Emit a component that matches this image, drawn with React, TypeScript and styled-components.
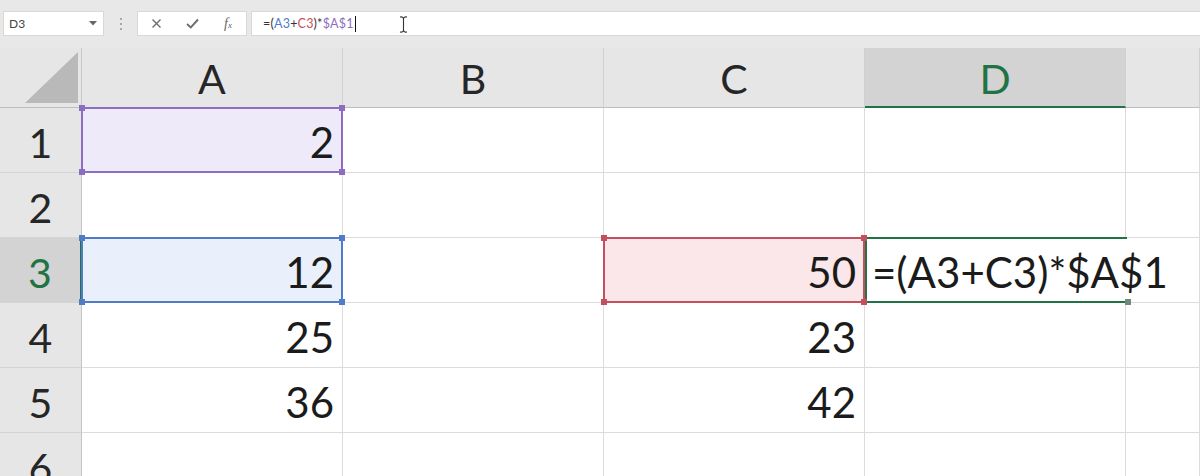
import React from 'react';
import styled, { createGlobalStyle } from 'styled-components';

const GREEN = '#217346';

const GlobalStyle = createGlobalStyle`
  html, body { margin: 0; padding: 0; background: #fff; overflow: hidden; }
  body { font-family: Lato, "Open Sans", sans-serif; }
  * { box-sizing: border-box; }
`;

const Page = styled.div`
  width: 1200px;
  height: 476px;
  overflow: hidden;
  display: flex;
  flex-direction: column;
  background: #fff;
`;

const Toolbar = styled.div`
  height: 48px;
  flex: none;
  background: #e8e8e8;
  display: flex;
  align-items: flex-start;
  padding: 11px 0 0 3px;
`;

const NameBox = styled.div`
  width: 101px;
  height: 25px;
  background: #fff;
  border: 1px solid #d8d8d8;
  display: flex;
  align-items: center;
  justify-content: space-between;
  padding: 0 6px 0 5px;
  font-family: Lato, sans-serif;
  font-size: 12px;
  color: #444;
`;

const Grip = styled.div`
  width: 33px;
  height: 25px;
  display: flex;
  flex-direction: column;
  align-items: center;
  justify-content: center;
  gap: 3px;
`;

const GripDot = styled.span`
  width: 2px;
  height: 2px;
  background: #a8a8a8;
`;

const FuncBox = styled.div`
  width: 110px;
  height: 25px;
  background: #fff;
  border: 1px solid #d8d8d8;
  display: grid;
  grid-template-columns: repeat(3, 36px);
  align-items: center;
  justify-items: center;
`;

const FxLabel = styled.span`
  font-family: "Liberation Serif", serif;
  font-style: italic;
  font-size: 14px;
  color: #666;
  line-height: 1;
`;

const FxSub = styled.span`
  font-size: 9px;
  font-style: italic;
`;

const FormulaBox = styled.div`
  position: relative;
  flex: 1;
  margin-left: 4px;
  height: 25px;
  background: #fff;
  border: 1px solid #d8d8d8;
  border-right: none;
  display: flex;
  align-items: center;
  padding-left: 11px;
  font-family: Lato, sans-serif;
  font-size: 12.5px;
  letter-spacing: 0.2px;
`;

const Token = styled.span<{ $color?: string }>`
  color: ${(p) => p.$color || '#333'};
`;

const Caret = styled.span`
  width: 1px;
  height: 16px;
  background: #111;
  margin-left: 1px;
`;

const IBeam = styled.svg`
  position: absolute;
  left: 147px;
  top: 4px;
`;

const Sheet = styled.div`
  flex: 1;
  display: grid;
  grid-template-columns: 82px repeat(4, 261px) 1fr;
  grid-template-rows: 60px repeat(6, 65px);
  overflow: hidden;
`;

const Corner = styled.div`
  background: #e6e6e6;
  border-right: 1px solid #c8c8c8;
  border-bottom: 1px solid #bdbdbd;
  display: flex;
  align-items: flex-end;
  justify-content: flex-end;
  padding: 0 3px 4px 0;
`;

const ColHeader = styled.div<{ $active?: boolean }>`
  background: ${(p) => (p.$active ? '#d3d3d3' : '#e6e6e6')};
  border-right: 1px solid #d0d0d0;
  border-bottom: ${(p) => (p.$active ? `2px solid ${GREEN}` : '1px solid #bdbdbd')};
  display: flex;
  align-items: center;
  justify-content: center;
  padding-top: 2px;
  font-size: 41px;
  color: ${(p) => (p.$active ? GREEN : '#262626')};
`;

const RowHeader = styled.div<{ $active?: boolean }>`
  background: ${(p) => (p.$active ? '#d3d3d3' : '#e6e6e6')};
  border-right: ${(p) => (p.$active ? `2px solid ${GREEN}` : '1px solid #c4c4c4')};
  border-bottom: 1px solid #d4d4d4;
  display: flex;
  align-items: center;
  justify-content: center;
  padding-top: 4px;
  font-size: 41px;
  color: ${(p) => (p.$active ? GREEN : '#262626')};
`;

const Cell = styled.div<{ $fill?: string; $editing?: boolean }>`
  position: relative;
  z-index: ${(p) => (p.$editing ? 2 : 'auto')};
  background: ${(p) => p.$fill || '#fff'};
  border-right: 1px solid ${(p) => (p.$editing ? 'transparent' : '#dcdcdc')};
  border-bottom: 1px solid #dcdcdc;
  display: flex;
  align-items: center;
  justify-content: ${(p) => (p.$editing ? 'flex-start' : 'flex-end')};
  padding: ${(p) => (p.$editing ? '4px 0 0 7px' : '4px 8px 0 8px')};
  font-size: 42px;
  color: #1b1b1b;
  white-space: nowrap;
  min-width: 0;
`;

const RangeOutline = styled.div<{ $color: string }>`
  position: absolute;
  inset: -1px;
  border: 2px solid ${(p) => p.$color};
  pointer-events: none;
  z-index: 3;
`;

const EditOutline = styled.div`
  position: absolute;
  top: -1px;
  bottom: -1px;
  left: 0;
  right: -2px;
  border: 2px solid ${GREEN};
  border-right: none;
  pointer-events: none;
  z-index: 3;
`;

const Handle = styled.span<{ $color: string; $v: 'top' | 'bottom'; $h: 'left' | 'right' }>`
  position: absolute;
  width: 6px;
  height: 6px;
  background: ${(p) => p.$color};
  ${(p) => p.$v}: -4px;
  ${(p) => p.$h}: -4px;
`;

const ranges: Record<string, { border: string; fill: string }> = {
  purple: { border: '#8c6dc2', fill: '#eeeafa' },
  blue: { border: '#4f7bc8', fill: '#e9effb' },
  red: { border: '#c4505f', fill: '#fbe7e9' },
};

type CellData = { value?: string; range?: string; editing?: boolean };

const rows: Record<number, Record<string, CellData>> = {
  1: { A: { value: '2', range: 'purple' } },
  2: {},
  3: { A: { value: '12', range: 'blue' }, C: { value: '50', range: 'red' }, D: { editing: true } },
  4: { A: { value: '25' }, C: { value: '23' } },
  5: { A: { value: '36' }, C: { value: '42' } },
  6: {},
};

const cols = ['A', 'B', 'C', 'D', 'E'];

const Corners = ({ color }: { color: string }) => (
  <>
    <Handle $color={color} $v="top" $h="left" />
    <Handle $color={color} $v="top" $h="right" />
    <Handle $color={color} $v="bottom" $h="left" />
    <Handle $color={color} $v="bottom" $h="right" />
  </>
);

const FormulaTokens = ({ big }: { big?: boolean }) => {
  const dark = big ? '#1b1b1b' : '#333';
  return (
    <>
      <Token $color={dark}>=(</Token>
      <Token $color={big ? dark : '#4f7bc8'}>A3</Token>
      <Token $color={dark}>+</Token>
      <Token $color={big ? dark : '#c4505f'}>C3</Token>
      <Token $color={dark}>)*</Token>
      <Token $color={big ? dark : '#8c6dc2'}>$A$1</Token>
    </>
  );
};

export default function App() {
  return (
    <Page>
      <GlobalStyle />
      <Toolbar>
        <NameBox>
          <span>D3</span>
          <svg width="8" height="5" viewBox="0 0 8 5">
            <path d="M0 0 L8 0 L4 4.5 Z" fill="#666" />
          </svg>
        </NameBox>
        <Grip>
          <GripDot />
          <GripDot />
          <GripDot />
        </Grip>
        <FuncBox>
          <svg width="11" height="11" viewBox="0 0 11 11">
            <path d="M1.5 1.5 L9.5 9.5 M9.5 1.5 L1.5 9.5" stroke="#6e6e6e" strokeWidth="1.4" />
          </svg>
          <svg width="13" height="11" viewBox="0 0 13 11">
            <path d="M1 6 L4.8 9.5 L12 1.5" stroke="#6e6e6e" strokeWidth="1.9" fill="none" />
          </svg>
          <FxLabel>
            f<FxSub>x</FxSub>
          </FxLabel>
        </FuncBox>
        <FormulaBox>
          <FormulaTokens />
          <Caret />
          <IBeam width="9" height="17" viewBox="0 0 9 17">
            <path
              d="M1 1 Q4.5 0.5 4.5 3 Q4.5 0.5 8 1 M4.5 3 V14 M1 16 Q4.5 16.5 4.5 14 Q4.5 16.5 8 16"
              stroke="#333"
              strokeWidth="1.1"
              fill="none"
            />
          </IBeam>
        </FormulaBox>
      </Toolbar>
      <Sheet>
        <Corner>
          <svg width="53" height="51" viewBox="0 0 53 51">
            <path d="M0 51 L53 0 L53 51 Z" fill="#b9b9b9" />
          </svg>
        </Corner>
        {cols.map((c) => (
          <ColHeader key={c} $active={c === 'D'}>
            {c === 'E' ? '' : c}
          </ColHeader>
        ))}
        {[1, 2, 3, 4, 5, 6].map((r) => (
          <React.Fragment key={r}>
            <RowHeader $active={r === 3}>{r}</RowHeader>
            {cols.map((c) => {
              const d = rows[r][c] || {};
              const rc = d.range ? ranges[d.range] : undefined;
              return (
                <Cell key={c} $fill={rc?.fill} $editing={d.editing}>
                  {d.value}
                  {d.editing && (
                    <>
                      <FormulaTokens big />
                      <EditOutline>
                        <Handle $color="#6f8a7a" $v="bottom" $h="right" />
                      </EditOutline>
                    </>
                  )}
                  {rc && (
                    <RangeOutline $color={rc.border}>
                      <Corners color={rc.border} />
                    </RangeOutline>
                  )}
                </Cell>
              );
            })}
          </React.Fragment>
        ))}
      </Sheet>
    </Page>
  );
}
